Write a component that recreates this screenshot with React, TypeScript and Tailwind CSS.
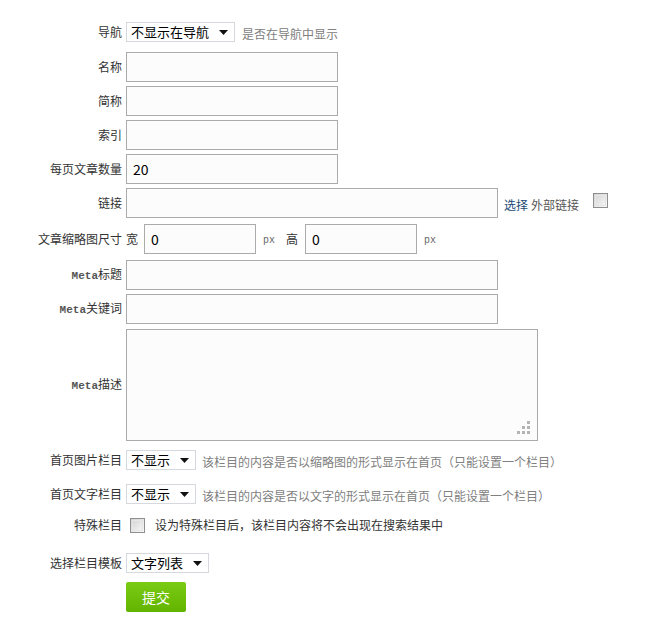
const cjk = { fontFamily: '"Noto Sans CJK SC", "Liberation Sans", sans-serif' };

function Label({ children }: { children: React.ReactNode }) {
  return (
    <div className="w-[126px] shrink-0 pr-[4px] text-right text-[12px] text-[#333]">
      {children}
    </div>
  );
}

function Meta({ text }: { text: string }) {
  return (
    <>
      <span className="text-[11px] font-bold text-[#555]" style={{ fontFamily: '"Liberation Mono", monospace' }}>
        Meta
      </span>
      {text}
    </>
  );
}

function Input({ w, value }: { w: string; value?: string }) {
  return (
    <input
      defaultValue={value}
      className={`${w} h-[30px] border border-[#ababab] bg-[#fcfcfc] px-[6px] text-[14px] text-black outline-none`}
      style={cjk}
    />
  );
}

function Select({ w, text }: { w: string; text: string }) {
  return (
    <div
      className={`${w} flex h-[20px] shrink-0 items-center justify-between border border-[#d5d9de] bg-white pr-[6px] pl-[4px] text-[13px] text-black`}
    >
      <span>{text}</span>
      <svg width="9" height="5" viewBox="0 0 9 5">
        <path d="M0 0h9L4.5 5z" fill="#111" />
      </svg>
    </div>
  );
}

function Checkbox() {
  return (
    <div className="h-[15px] w-[15px] border border-[#8f8f8f] bg-gradient-to-br from-[#d2d2d2] to-[#fafafa] p-[1px]">
      <div className="h-full w-full border border-[#e6e6e6]" />
    </div>
  );
}

function Hint({ children }: { children: React.ReactNode }) {
  return <span className="text-[12px] text-[#808080]">{children}</span>;
}

export default function App() {
  return (
    <div className="min-h-[623px] w-[649px] bg-white pt-[22px]" style={cjk}>
      <div className="flex h-[20px] items-center">
        <Label>导航</Label>
        <Select w="w-[109px]" text="不显示在导航" />
        <span className="ml-[7px]">
          <Hint>是否在导航中显示</Hint>
        </span>
      </div>

      <div className="mt-[10px] flex items-center">
        <Label>名称</Label>
        <Input w="w-[212px]" />
      </div>
      <div className="mt-[4px] flex items-center">
        <Label>简称</Label>
        <Input w="w-[212px]" />
      </div>
      <div className="mt-[4px] flex items-center">
        <Label>索引</Label>
        <Input w="w-[212px]" />
      </div>
      <div className="mt-[4px] flex items-center">
        <Label>每页文章数量</Label>
        <Input w="w-[212px]" value="20" />
      </div>

      <div className="mt-[4px] flex items-center">
        <Label>链接</Label>
        <Input w="w-[372px]" />
        <span className="ml-[6px] mt-[3px] text-[12px] text-[#1b4a75]">选择</span>
        <span className="ml-[3px] mt-[3px] text-[12px] text-[#555]">外部链接</span>
        <div className="mb-[6px] ml-[14px]">
          <Checkbox />
        </div>
      </div>

      <div className="mt-[6px] flex items-center">
        <Label>文章缩略图尺寸</Label>
        <span className="text-[12px] text-[#333]">宽</span>
        <div className="ml-[6px]">
          <Input w="w-[112px]" value="0" />
        </div>
        <span className="ml-[7px] mt-[3px] text-[10px] text-[#666]" style={{ fontFamily: '"Liberation Mono", monospace' }}>
          px
        </span>
        <span className="ml-[11px] text-[12px] text-[#333]">高</span>
        <div className="ml-[7px]">
          <Input w="w-[112px]" value="0" />
        </div>
        <span className="ml-[7px] mt-[3px] text-[10px] text-[#666]" style={{ fontFamily: '"Liberation Mono", monospace' }}>
          px
        </span>
      </div>

      <div className="mt-[6px] flex items-center">
        <Label>
          <Meta text="标题" />
        </Label>
        <Input w="w-[372px]" />
      </div>
      <div className="mt-[4px] flex items-center">
        <Label>
          <Meta text="关键词" />
        </Label>
        <Input w="w-[372px]" />
      </div>
      <div className="mt-[5px] flex items-center">
        <Label>
          <Meta text="描述" />
        </Label>
        <div className="relative">
          <textarea className="block h-[112px] w-[412px] resize-none border border-[#ababab] bg-[#fcfcfc] outline-none" />
          <svg className="absolute right-[8px] bottom-[7px]" width="13" height="13" viewBox="0 0 13 13">
            <g fill="#b4b4b4">
              <rect x="10" y="0" width="3" height="3" />
              <rect x="5" y="5" width="3" height="3" />
              <rect x="10" y="5" width="3" height="3" />
              <rect x="0" y="10" width="3" height="3" />
              <rect x="5" y="10" width="3" height="3" />
              <rect x="10" y="10" width="3" height="3" />
            </g>
          </svg>
        </div>
      </div>

      <div className="mt-[9px] flex h-[20px] items-center">
        <Label>首页图片栏目</Label>
        <Select w="w-[70px]" text="不显示" />
        <span className="ml-[6px]">
          <Hint>该栏目的内容是否以缩略图的形式显示在首页（只能设置一个栏目）</Hint>
        </span>
      </div>
      <div className="mt-[14px] flex h-[20px] items-center">
        <Label>首页文字栏目</Label>
        <Select w="w-[70px]" text="不显示" />
        <span className="ml-[6px]">
          <Hint>该栏目的内容是否以文字的形式显示在首页（只能设置一个栏目）</Hint>
        </span>
      </div>
      <div className="mt-[13px] flex h-[16px] items-center">
        <Label>特殊栏目</Label>
        <div className="ml-[4px]">
          <Checkbox />
        </div>
        <span className="ml-[10px] text-[12px] text-[#333]">设为特殊栏目后，该栏目内容将不会出现在搜索结果中</span>
      </div>
      <div className="mt-[20px] flex h-[20px] items-center">
        <Label>选择栏目模板</Label>
        <Select w="w-[83px]" text="文字列表" />
      </div>

      <div className="mt-[9px] flex">
        <div className="w-[126px] shrink-0" />
        <button className="h-[30px] w-[60px] rounded-[2px] bg-gradient-to-b from-[#7acb14] to-[#62b400] text-[14px] text-white">
          提交
        </button>
      </div>
    </div>
  );
}
